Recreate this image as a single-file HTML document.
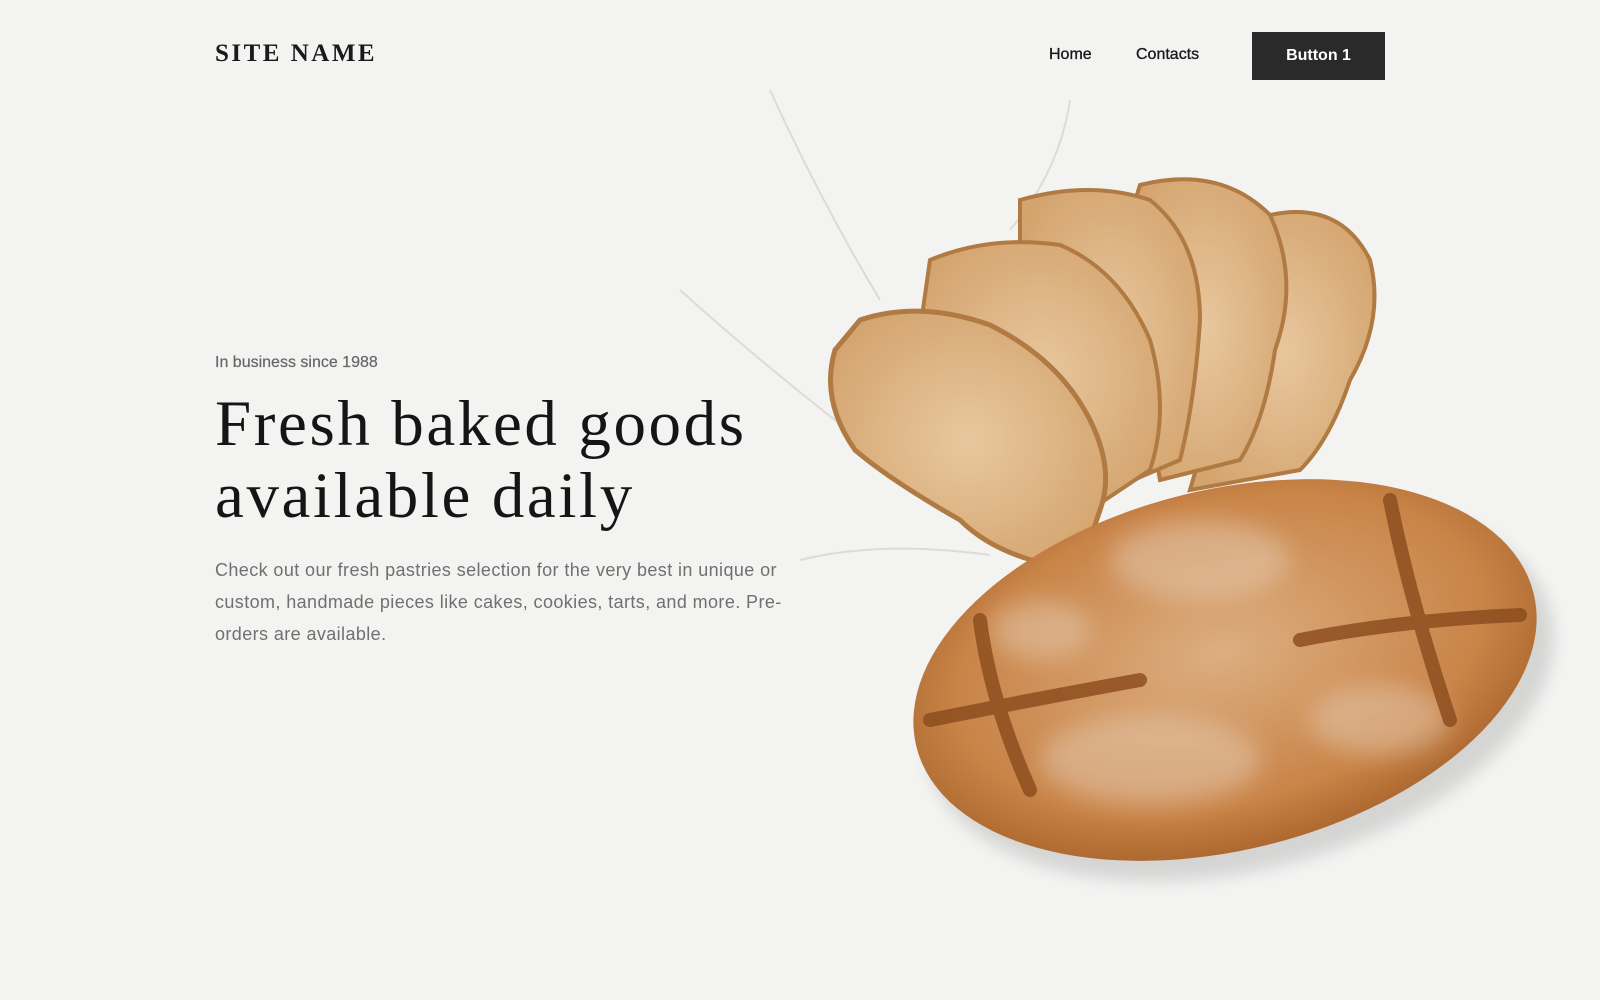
<!DOCTYPE html>
<html><head><meta charset="utf-8"><style>
body{margin:0;width:1600px;height:1000px;overflow:hidden;background:#f3f3f2;font-family:"Liberation Sans",sans-serif;position:relative}
.logo{position:absolute;left:215px;top:40px;font-family:"Liberation Serif",serif;font-size:25px;letter-spacing:2.5px;color:#1a1a1a;font-weight:bold}
.nav{position:absolute;top:46px;font-size:16px;color:#1a1a1a;-webkit-text-stroke:.35px #1a1a1a}
.btn{position:absolute;left:1252px;top:32px;width:133px;height:48px;background:#2a2a2a;color:#fff;font-size:16px;font-weight:bold;text-align:center;line-height:48px}
.tag{position:absolute;left:215px;top:354px;font-size:16px;color:#666;-webkit-text-stroke:.2px #666}
h1{position:absolute;left:215px;top:388px;margin:0;font-family:"Liberation Serif",serif;font-weight:normal;font-size:65px;letter-spacing:2.6px;line-height:72px;color:#151515}
p{position:absolute;left:215px;top:554px;margin:0;width:590px;font-size:18px;letter-spacing:.4px;line-height:32px;color:#707070}
svg{position:absolute;left:0;top:0}
</style></head><body>
<svg width="1600" height="1000">
<defs>
<radialGradient id="crust" cx="50%" cy="45%" r="60%"><stop offset="0" stop-color="#dcae80"/><stop offset=".7" stop-color="#c98448"/><stop offset="1" stop-color="#a35e26"/></radialGradient>
<radialGradient id="crumb" cx="50%" cy="50%" r="60%"><stop offset="0" stop-color="#e8c79e"/><stop offset="1" stop-color="#d4a46e"/></radialGradient>
<filter id="sh"><feGaussianBlur stdDeviation="8"/></filter>
<filter id="bl"><feGaussianBlur stdDeviation="12"/></filter>
</defs>
<g stroke="#d8d4cf" stroke-width="2" fill="none" opacity=".8">
<path d="M680 290 Q780 380 900 470"/><path d="M770 90 Q820 200 880 300"/><path d="M1070 100 Q1060 170 1010 230"/><path d="M800 560 Q880 540 990 555"/>
</g>
<g>
<path d="M1270 215 Q1340 200 1370 260 Q1385 320 1350 380 Q1330 440 1300 470 L1190 490 Z" fill="url(#crumb)" stroke="#b07a42" stroke-width="4"/>
<path d="M1140 185 Q1220 165 1270 215 Q1300 280 1275 350 Q1265 420 1240 460 L1160 480 L1120 250 Z" fill="url(#crumb)" stroke="#b07a42" stroke-width="4"/>
<path d="M1020 200 Q1090 180 1150 200 Q1200 240 1200 320 Q1195 400 1180 460 L1110 490 L1020 300 Z" fill="url(#crumb)" stroke="#b07a42" stroke-width="4"/>
<path d="M930 260 Q990 235 1060 245 Q1120 270 1150 340 Q1170 410 1150 470 L1090 510 L920 330 Z" fill="url(#crumb)" stroke="#b07a42" stroke-width="4"/>
<path d="M860 320 Q920 300 990 325 Q1060 360 1090 420 Q1115 470 1100 510 L1080 570 Q1000 560 960 520 Q890 480 855 450 Q820 400 835 350 Z" fill="url(#crumb)" stroke="#b07a42" stroke-width="5"/>
</g>
<ellipse cx="1240" cy="690" rx="320" ry="180" transform="rotate(-14 1240 690)" fill="#000" opacity=".12" filter="url(#sh)"/>
<ellipse cx="1225" cy="670" rx="318" ry="180" transform="rotate(-14 1225 670)" fill="url(#crust)"/>
<g fill="#f0e6da" opacity=".35" filter="url(#bl)">
<ellipse cx="1200" cy="560" rx="90" ry="40"/><ellipse cx="1150" cy="760" rx="110" ry="45"/><ellipse cx="1380" cy="720" rx="70" ry="35"/><ellipse cx="1040" cy="630" rx="50" ry="30"/>
</g>
<g stroke="#8a4a1c" stroke-width="14" fill="none" stroke-linecap="round" opacity=".8">
<path d="M930 720 Q1030 700 1140 680"/><path d="M980 620 Q990 700 1030 790"/><path d="M1300 640 Q1400 620 1520 615"/><path d="M1390 500 Q1410 600 1450 720"/>
</g>
</svg>
<div class="logo">SITE NAME</div>
<div class="nav" style="left:1049px">Home</div>
<div class="nav" style="left:1136px">Contacts</div>
<div class="btn">Button 1</div>
<div class="tag">In business since 1988</div>
<h1>Fresh baked goods<br>available daily</h1>
<p>Check out our fresh pastries selection for the very best in unique or custom, handmade pieces like cakes, cookies, tarts, and more. Pre-orders are available.</p>
</body></html>
